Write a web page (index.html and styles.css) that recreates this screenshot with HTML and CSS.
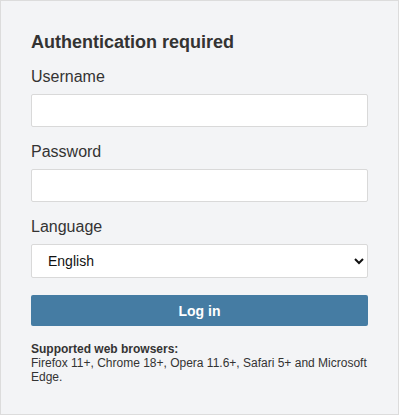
FILE: index.html
```html
<!DOCTYPE html>
<html lang="en">
<head>
<meta charset="utf-8">
<title>Authentication required</title>
<link rel="stylesheet" href="styles.css">
</head>
<body>
<form class="panel">
  <h1 class="title">Authentication required</h1>
  <label class="label" for="user">Username</label>
  <input class="field" id="user" type="text">
  <label class="label" for="pass">Password</label>
  <input class="field" id="pass" type="password">
  <label class="label" for="lang">Language</label>
  <select class="field select" id="lang">
    <option>English</option>
  </select>
  <button class="button" type="button">Log in</button>
  <div class="note">
    <strong>Supported web browsers:</strong><br>
    Firefox 11+, Chrome 18+, Opera 11.6+, Safari 5+ and Microsoft Edge.
  </div>
</form>
</body>
</html>
```

FILE: styles.css
```css
html, body {
  margin: 0;
  padding: 0;
  background: #ffffff;
}

body {
  font-family: "Liberation Sans", Arial, sans-serif;
  color: #333333;
}

.panel {
  box-sizing: border-box;
  width: 399px;
  padding: 30px;
  background: #f3f4f6;
  border: 1px solid #dcdcdc;
  display: flex;
  flex-direction: column;
}

.title {
  margin: 0 0 15px;
  font-size: 18px;
  line-height: 22px;
  font-weight: bold;
  color: #333333;
}

.label {
  font-size: 16px;
  line-height: 18px;
  margin: 0 0 8px;
  color: #333333;
}

.field {
  box-sizing: border-box;
  width: 100%;
  height: 33px;
  margin: 0 0 16px;
  padding: 0 14px;
  border: 1px solid #d9d9d9;
  border-radius: 2px;
  background: #ffffff;
  font-family: "Liberation Sans", Arial, sans-serif;
  font-size: 14px;
  color: #111111;
  outline: none;
}

.select {
  height: 34px;
  margin-bottom: 17px;
  padding-left: 12px;
}

.button {
  height: 31px;
  margin: 0 0 16px;
  border: none;
  border-radius: 2px;
  background: #457ca3;
  color: #ffffff;
  font-family: "Liberation Sans", Arial, sans-serif;
  font-size: 14px;
  font-weight: bold;
}

.note {
  font-size: 12px;
  line-height: 14px;
  color: #333333;
}
```
